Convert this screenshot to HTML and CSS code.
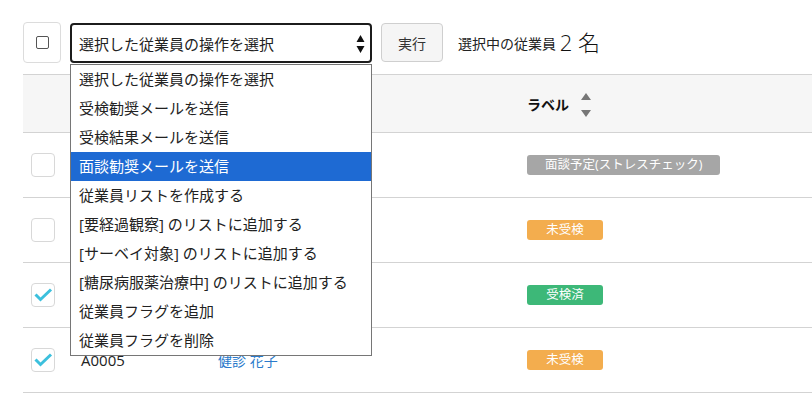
FILE: index.html
```html
<!DOCTYPE html>
<html lang="ja">
<head>
<meta charset="utf-8">
<title>従業員一覧</title>
<link rel="stylesheet" href="styles.css">
</head>
<body>
<div class="page">
  <div class="toolbar">
    <div class="all-box"><span class="cb-small"></span></div>
    <div class="select-wrap">
      <div class="select">
        <span>選択した従業員の操作を選択</span>
        <svg class="sel-arrows" width="9" height="18" viewBox="0 0 9 18"><path d="M4.5 0 L8.5 7 L0.5 7 Z M0.5 11 L8.5 11 L4.5 18 Z" fill="#111"/></svg>
      </div>
      <ul class="options">
        <li>選択した従業員の操作を選択</li>
        <li>受検勧奨メールを送信</li>
        <li>受検結果メールを送信</li>
        <li class="active">面談勧奨メールを送信</li>
        <li>従業員リストを作成する</li>
        <li>[要経過観察] のリストに追加する</li>
        <li>[サーベイ対象] のリストに追加する</li>
        <li>[糖尿病服薬治療中] のリストに追加する</li>
        <li>従業員フラグを追加</li>
        <li>従業員フラグを削除</li>
      </ul>
    </div>
    <button class="run">実行</button>
    <div class="count">選択中の従業員 <span class="num">2 名</span></div>
  </div>

  <div class="table">
    <div class="row head">
      <div class="cell"></div>
      <div class="cell"></div>
      <div class="cell"></div>
      <div class="cell label-head">ラベル
        <svg class="sort" width="10" height="24" viewBox="0 0 10 24"><path d="M5 0 L10 7 L0 7 Z M0 17 L10 17 L5 24 Z" fill="#777"/></svg>
      </div>
    </div>
    <div class="row">
      <div class="cell"><span class="cb"></span></div>
      <div class="cell"></div>
      <div class="cell"></div>
      <div class="cell"><span class="badge gray">面談予定(ストレスチェック)</span></div>
    </div>
    <div class="row">
      <div class="cell"><span class="cb"></span></div>
      <div class="cell"></div>
      <div class="cell"></div>
      <div class="cell"><span class="badge orange">未受検</span></div>
    </div>
    <div class="row">
      <div class="cell"><span class="cb checked"><svg width="24" height="24" viewBox="0 0 24 24"><path d="M4.5 11.5 L9.5 16.5 L20 6.5" fill="none" stroke="#3cc0dd" stroke-width="3"/></svg></span></div>
      <div class="cell"></div>
      <div class="cell"></div>
      <div class="cell"><span class="badge green">受検済</span></div>
    </div>
    <div class="row">
      <div class="cell"><span class="cb checked"><svg width="24" height="24" viewBox="0 0 24 24"><path d="M4.5 11.5 L9.5 16.5 L20 6.5" fill="none" stroke="#3cc0dd" stroke-width="3"/></svg></span></div>
      <div class="cell id">A0005</div>
      <div class="cell"><span class="name">健診 花子</span></div>
      <div class="cell"><span class="badge orange">未受検</span></div>
    </div>
  </div>
</div>
</body>
</html>
```
FILE: styles.css
```css
* { box-sizing: border-box; }
html, body { margin: 0; padding: 0; background: #fff; }
body {
  font-family: "Open Sans", "Noto Sans CJK JP", sans-serif;
  color: #222;
  font-size: 14px;
  overflow: hidden;
}
.page { padding-left: 23px; }

.toolbar {
  display: flex;
  align-items: flex-start;
  padding-top: 22px;
  height: 74px;
}
.all-box {
  width: 38px;
  height: 41px;
  border: 1px solid #dcdcdc;
  border-radius: 4px;
  display: flex;
  align-items: center;
  justify-content: center;
}
.cb-small {
  width: 13px;
  height: 13px;
  border: 1px solid #555;
  border-radius: 2px;
  background: #fff;
}
.select-wrap {
  position: relative;
  margin-left: 9px;
  margin-top: 1px;
  width: 302px;
}
.select {
  height: 40px;
  border: 2px solid #1c1c1c;
  border-radius: 4px;
  display: flex;
  align-items: center;
  justify-content: space-between;
  padding: 0 5px 0 7px;
  font-size: 15px;
  color: #222;
}
.sel-arrows { margin-top: 1px; }
.options {
  position: absolute;
  top: 41px;
  left: 0;
  width: 302px;
  margin: 0;
  padding: 0;
  list-style: none;
  background: #fff;
  border: 1px solid #767676;
  z-index: 10;
}
.options li {
  height: 29px;
  line-height: 29px;
  padding-left: 8px;
  font-size: 15px;
  color: #222;
  white-space: nowrap;
}
.options li.active { background: #1e6ad3; color: #fff; }

.run {
  margin-left: 9px;
  margin-top: 1px;
  width: 62px;
  height: 39px;
  background: #f5f5f5;
  border: 1px solid #cfcfcf;
  border-radius: 4px;
  font-family: "Open Sans", "Noto Sans CJK JP", sans-serif;
  font-size: 14px;
  color: #333;
  padding: 0;
}
.count {
  margin-left: 15px;
  height: 41px;
  display: flex;
  align-items: center;
  font-size: 14px;
  color: #222;
  white-space: pre;
}
.count .num { font-size: 22px; font-weight: 300; margin-top: -3px; color: #111; }

.table { border-top: 1px solid #d3d3d3; }
.row {
  display: grid;
  grid-template-columns: 47px 137px 309px 1fr;
  height: 65px;
  border-bottom: 1px solid #d3d3d3;
  align-items: center;
}
.row.head { height: 58px; background: #f6f6f6; }
.cell { padding-left: 11px; display: flex; align-items: center; white-space: nowrap; }
.cell:first-child { padding-left: 8px; }
.cell.id { font-size: 15px; }
.label-head { font-weight: 700; font-size: 14px; color: #111; }
.sort { margin-left: 12px; margin-top: 2px; }

.cb {
  width: 24px;
  height: 24px;
  border: 1px solid #d8d8d8;
  border-radius: 4px;
  display: inline-block;
  position: relative;
  background: #fff;
}
.cb svg { position: absolute; left: -1px; top: -1px; }
.name { color: #2a7acb; }

.badge {
  display: inline-block;
  height: 20px;
  line-height: 20px;
  padding: 0 18px;
  min-width: 76px;
  text-align: center;
  border-radius: 3px;
  color: #fff;
  font-size: 12.5px;
}
.gray { background: #a6a6a6; }
.orange { background: #f3ad4e; }
.green { background: #3db878; }
```
